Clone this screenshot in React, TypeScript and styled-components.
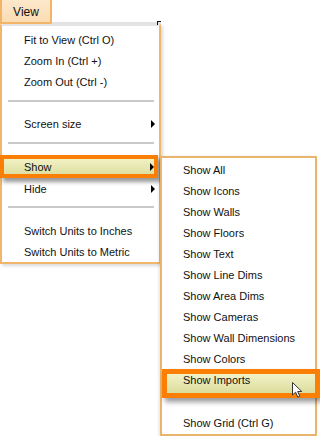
import React from "react";
import styled, { createGlobalStyle } from "styled-components";

const GlobalStyle = createGlobalStyle`
	html, body {
		margin: 0;
		padding: 0;
		background: #ffffff;
	}
	body {
		font-family: "Liberation Sans", Arial, sans-serif;
	}
`;

type Item = { label: string; arrow?: boolean; active?: boolean };

const mainGroups: Item[][] = [
	[{ label: "Fit to View (Ctrl O)" }, { label: "Zoom In (Ctrl +)" }, { label: "Zoom Out (Ctrl -)" }],
	[{ label: "Screen size", arrow: true }],
	[
		{ label: "Show", arrow: true, active: true },
		{ label: "Hide", arrow: true },
	],
	[{ label: "Switch Units to Inches" }, { label: "Switch Units to Metric" }],
];

const showItems = [
	"Show All",
	"Show Icons",
	"Show Walls",
	"Show Floors",
	"Show Text",
	"Show Line Dims",
	"Show Area Dims",
	"Show Cameras",
	"Show Wall Dimensions",
	"Show Colors",
];

const App = () => {
	return (
		<Page>
			<GlobalStyle />
			<MenuBar>
				<ViewButton>View</ViewButton>
				<BarEdge />
				<CornerMark />
			</MenuBar>
			<MainMenu>
				{mainGroups.map((group, gi) => (
					<React.Fragment key={gi}>
						{gi > 0 && <Separator $last={gi === mainGroups.length - 1} />}
						{group.map((item) =>
							item.active ? (
								<ActiveRow key={item.label}>
									<span>{item.label}</span>
									{item.arrow && <Arrow />}
								</ActiveRow>
							) : (
								<Row key={item.label}>
									<span>{item.label}</span>
									{item.arrow && <Arrow />}
								</Row>
							),
						)}
					</React.Fragment>
				))}
			</MainMenu>

			<SubMenu>
				{showItems.map((label) => (
					<SubRow key={label}>{label}</SubRow>
				))}
				<SubActiveRow>Show Imports</SubActiveRow>
				<SubRow $gap>Show Grid (Ctrl G)</SubRow>
			</SubMenu>

			<Cursor width="12" height="17" viewBox="0 0 12 17">
				<path
					d="M0.5 0.5 L0.5 13 L3.6 10.2 L5.8 15.2 L7.8 14.3 L5.7 9.5 L9.8 9.5 Z"
					fill="#ffffff"
					stroke="#333333"
					strokeWidth="1"
					strokeLinejoin="round"
				/>
			</Cursor>
		</Page>
	);
};

export default App;

const Page = styled.div`
	position: relative;
	width: 320px;
	height: 436px;
	overflow: hidden;
	background: #ffffff;
	color: #111111;
	font-size: 11px;
`;

const MenuBar = styled.div`
	position: relative;
	display: flex;
	align-items: flex-end;
	width: 161px;
	height: 24px;
`;

const ViewButton = styled.div`
	box-sizing: border-box;
	width: 52px;
	height: 24px;
	display: flex;
	align-items: center;
	justify-content: center;
	padding-top: 1px;
	background: linear-gradient(#fde8cb, #fbdcb3);
	border: 2px solid #f2b466;
	border-top: none;
	font-size: 12px;
	color: #111111;
`;

const BarEdge = styled.div`
	flex: 1;
	height: 2px;
	background: #e2e2e2;
`;

const CornerMark = styled.div`
	position: absolute;
	right: 0;
	top: 21px;
	width: 3px;
	height: 3px;
	border-top: 1px solid #111;
	border-left: 1px solid #111;
`;

const MainMenu = styled.div`
	box-sizing: border-box;
	width: 161px;
	padding: 3px 0 0;
	background: #ffffff;
	border: 2px solid #f0b66c;
	border-top: 2px solid #e4e4e4;
	box-shadow: 2px 2px 3px rgba(0, 0, 0, 0.15);
`;

const Row = styled.div`
	display: flex;
	align-items: center;
	justify-content: space-between;
	height: 21px;
	padding: 0 4px 0 22px;
	white-space: nowrap;
`;

const ActiveRow = styled.div`
	box-sizing: border-box;
	display: flex;
	align-items: center;
	justify-content: space-between;
	height: 23px;
	margin: 0 1px 0 -2px;
	padding: 0 0 0 20px;
	border: 4px solid #fb7f05;
	background: linear-gradient(#f1f1c4, #dfdfa2);
	box-shadow: 3px 4px 4px rgba(0, 0, 0, 0.4);
	position: relative;
`;

const Arrow = styled.i`
	width: 0;
	height: 0;
	border-left: 4px solid #000000;
	border-top: 4px solid transparent;
	border-bottom: 4px solid transparent;
`;

const Separator = styled.div<{ $last?: boolean }>`
	height: 2px;
	margin: ${(p) => (p.$last ? "7px 5px 12px 6px" : "8px 5px 11px 6px")};
	background: #c9c9c9;
`;

const SubMenu = styled.div`
	position: absolute;
	left: 160px;
	top: 156px;
	box-sizing: border-box;
	width: 157px;
	height: 280px;
	padding-top: 1px;
	background: #ffffff;
	border: 2px solid #e9b46c;
	box-shadow: -1px 1px 3px rgba(0, 0, 0, 0.12);
`;

const SubRow = styled.div<{ $gap?: boolean }>`
	display: flex;
	align-items: center;
	height: 21px;
	padding-left: 21px;
	margin-top: ${(p) => (p.$gap ? 14 : 0)}px;
	white-space: nowrap;
`;

const SubActiveRow = styled.div`
	box-sizing: border-box;
	height: 29px;
	margin-right: -5px;
	padding: 0 0 0 16px;
	line-height: 12px;
	border: 5px solid #fb7f05;
	background: linear-gradient(#f2f2c8, #dcdc9c);
	box-shadow: 3px 4px 5px rgba(0, 0, 0, 0.4);
	white-space: nowrap;
`;

const Cursor = styled.svg`
	position: absolute;
	left: 292px;
	top: 382px;
`;
